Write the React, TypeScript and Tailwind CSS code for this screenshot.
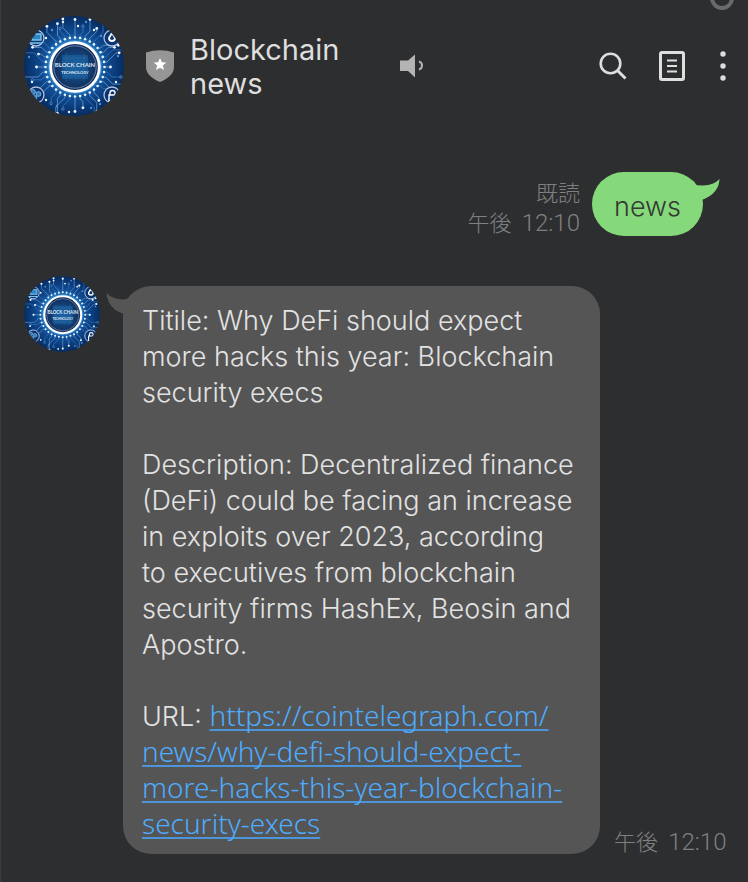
type Point = [number, number];

type Trace = { points: Point[]; bright: boolean };

const CENTER = 51;

function buildTraces(): Trace[] {
  const traces: Trace[] = [];
  const count = 36;
  for (let i = 0; i < count; i++) {
    const angle = (i / count) * Math.PI * 2;
    const dx = Math.cos(angle);
    const dy = Math.sin(angle);
    const start: Point = [CENTER + dx * 29.5, CENTER + dy * 29.5];
    const reach = 4 + ((i * 5) % 4) * 3;
    const tail = 3 + ((i * 7) % 5) * 3;
    const sx = Math.sign(dx) || 1;
    const sy = Math.sign(dy) || 1;
    const points: Point[] = [start];
    if (Math.abs(dx) > Math.abs(dy)) {
      const bend = Math.abs(dy) < 0.12 ? 0 : reach * 0.7;
      points.push([start[0] + sx * 3, start[1]]);
      points.push([start[0] + sx * (3 + bend), start[1] + sy * bend]);
      points.push([start[0] + sx * (3 + bend + tail), start[1] + sy * bend]);
    } else {
      const bend = Math.abs(dx) < 0.12 ? 0 : reach * 0.7;
      points.push([start[0], start[1] + sy * 3]);
      points.push([start[0] + sx * bend, start[1] + sy * (3 + bend)]);
      points.push([start[0] + sx * bend, start[1] + sy * (3 + bend + tail)]);
    }
    traces.push({ points, bright: i % 3 !== 1 });
  }
  return traces;
}

const traces = buildTraces();

const looseDots: Point[] = [
  [28, 14], [39, 6], [62, 6], [70, 14], [5, 41], [8, 66], [94, 40], [92, 66],
  [33, 90], [45, 96], [67, 92], [22, 22], [77, 20], [22, 84], [76, 88], [54, 10],
];

const badges: Point[] = [[12, 22], [88, 22], [12, 79], [88, 79]];

function Avatar({ id, className }: { id: string; className: string }) {
  return (
    <svg viewBox="0 0 100 100" className={className} role="img" aria-label="Blockchain news">
      <defs>
        <radialGradient id={id + '-bg'}>
          <stop offset="0.5" stopColor="#2475ba" />
          <stop offset="0.64" stopColor="#114d94" />
          <stop offset="0.85" stopColor="#0a3a78" />
          <stop offset="1" stopColor="#072c60" />
        </radialGradient>
        <radialGradient id={id + '-core'}>
          <stop offset="0" stopColor="#1b5c9b" />
          <stop offset="0.6" stopColor="#133f74" />
          <stop offset="1" stopColor="#102a54" />
        </radialGradient>
        <clipPath id={id + '-clip'}>
          <circle cx="50" cy="50" r="50" />
        </clipPath>
      </defs>
      <g clipPath={'url(#' + id + '-clip)'}>
        <rect width="100" height="100" fill={'url(#' + id + '-bg)'} />
        {traces.map(({ points, bright }, i) => {
          const end = points[points.length - 1];
          return (
            <g key={i}>
              <polyline
                points={points.map((p) => p.join(',')).join(' ')}
                fill="none"
                stroke={bright ? '#78ade4' : '#3f80c8'}
                strokeWidth="0.7"
              />
              <circle cx={points[0][0]} cy={points[0][1]} r="1.3" fill="#e6f6ff" />
              {bright ? (
                <circle cx={end[0]} cy={end[1]} r="1.4" fill="#f2f9ff" />
              ) : (
                <circle cx={end[0]} cy={end[1]} r="1.3" fill="#0c4388" stroke="#6ba4e0" strokeWidth="0.6" />
              )}
            </g>
          );
        })}
        {looseDots.map(([x, y], i) => (
          <circle key={i} cx={x} cy={y} r="1.2" fill={i % 2 ? '#eaf5ff' : '#4c8fd6'} />
        ))}
        {badges.map(([x, y], i) => (
          <circle key={i} cx={x} cy={y} r="8" fill="#0a3470" stroke="#b4c4e2" strokeWidth="1.3" />
        ))}
        <path d="M8 18h9v6H8zM6 27h12" fill="#2f86c4" stroke="#7cc4ec" strokeWidth="1.4" />
        <path d="M88 17l-3 5a3 3 0 1 0 6 0z" fill="none" stroke="#fff" strokeWidth="1.8" />
        <g fill="#347cbd" stroke="#8bbfe8" strokeWidth="0.8">
          <circle cx="9" cy="76" r="2.4" />
          <circle cx="14.500" cy="78" r="2.4" />
          <circle cx="10.500" cy="82" r="2.4" />
        </g>
        <path d="M85 79h7v6h-7zM86 79v-2a2.500 2.500 0 0 1 5 0v2" fill="none" stroke="#fff" strokeWidth="1.4" />
        <circle cx="51" cy="51" r="27" fill="#5db5f0" opacity="0.35" />
        <circle cx="51" cy="51" r="24.3" fill={'url(#' + id + '-core)'} stroke="#fff" strokeWidth="2.8" />
        <circle cx="51" cy="51" r="21.200" fill="none" stroke="#8296ba" strokeWidth="0.8" />
        <path d="M38 39h26v24H38z" fill="#2474b5" opacity="0.4" />
        <path d="M38 42h26M38 60h26M42 36v30M60 36v30" stroke="#3f8dca" strokeWidth="0.4" opacity="0.6" />
        <text x="51" y="50.5" textAnchor="middle" className="fill-[#dfe8f4] font-['Lato',sans-serif] text-[6px] font-bold">
          BLOCK CHAIN
        </text>
        <text x="51" y="58" textAnchor="middle" className="fill-[#dce9f7] font-['Lato',sans-serif] text-[4px] font-bold">
          TECHNOLOGY
        </text>
      </g>
    </svg>
  );
}

function Header() {
  return (
    <header className="flex h-33 items-center pl-6 pr-[22px]">
      <Avatar id="header" className="size-25 shrink-0" />
      <svg viewBox="0 0 28 32" className="ml-5.5 h-8 w-7 shrink-0" aria-hidden="true">
        <path d="M0 2.4Q14-2 28 2.4V17c0 7-6 11.500-14 15C6 28.500 0 24 0 17z" fill="#969696" />
        <path d="M14 8l1.800 4.200 4.500.4-3.400 3 1 4.400-3.900-2.300-3.900 2.300 1-4.400-3.400-3 4.500-.4z" fill="#fff" />
      </svg>
      <h1 className="ml-4 mt-0.5 w-50 text-[29px] font-normal leading-[34px]">Blockchain news</h1>
      <svg viewBox="0 0 24 24" className="ml-2.5 size-6 shrink-0" aria-label="Sound on" role="img">
        <path d="M0 6.500h8L15 .5v23L8 17H0z" fill="#b4b4b4" />
        <path d="M19 7.500c4 1 4 7 0 8" fill="none" stroke="#b4b4b4" strokeWidth="2" />
      </svg>
      <nav className="ml-auto flex items-center">
        <button type="button" aria-label="Search" className="mr-8">
          <svg viewBox="0 0 28 28" className="size-7" fill="none" stroke="#dedede">
            <circle cx="11.500" cy="11.500" r="9.800" strokeWidth="2.600" />
            <path d="M18.500 18.500l8 8" strokeWidth="3" />
          </svg>
        </button>
        <button type="button" aria-label="Notes" className="mr-[35px]">
          <svg viewBox="0 0 26 30" className="h-7.5 w-6.5" fill="none" stroke="#dedede">
            <rect x="1.500" y="1.500" width="23" height="27" rx="1.500" strokeWidth="3" />
            <path d="M8 9.500h10M8 15h10M8 20.500h10" strokeWidth="2.200" />
          </svg>
        </button>
        <button type="button" aria-label="More">
          <svg viewBox="0 0 6 30" className="h-7.5 w-1.5" fill="#dedede">
            <circle cx="3" cy="3" r="2.700" />
            <circle cx="3" cy="15" r="2.700" />
            <circle cx="3" cy="27" r="2.700" />
          </svg>
        </button>
      </nav>
    </header>
  );
}

function Time() {
  return (
    <time className="whitespace-nowrap">
      午後 <span className="ml-1 font-['Roboto',sans-serif] text-2xl leading-none">12:10</span>
    </time>
  );
}

function SentMessage() {
  return (
    <div className="mt-10 flex items-start justify-end pr-[45px]">
      <p className="mr-3 mt-1.5 text-right text-[22px] leading-[30px] text-[#7f8081]">
        既読
        <br />
        <Time />
      </p>
      <div className="relative rounded-[32px] bg-[#86d97b] px-[22px] pb-[11px] pt-[17px] text-[27px] leading-9 text-[#343934]">
        news
        <svg viewBox="0 0 30 24" className="absolute -right-[17px] top-1.5 h-6 w-[30px]" fill="#86d97b" aria-hidden="true">
          <path d="M0 6Q6 7.500 13 7.500Q24 7 29.500 1Q29 15 13 21.500L0 22z" />
        </svg>
      </div>
    </div>
  );
}

function ReceivedMessage() {
  return (
    <div className="mt-[38px] flex items-end pl-6 pr-5">
      <Avatar id="message" className="size-19 shrink-0 self-start" />
      <article className="relative ml-[23px] mt-2.5 w-[477px] rounded-[28px] bg-[#555] pb-[11px] pl-[19px] pt-[17px] text-[27px] leading-9 text-[#e2e2e2]">
        <svg viewBox="0 0 30 24" className="absolute -left-[17px] top-1.5 h-6 w-[30px]" fill="#555" aria-hidden="true">
          <path d="M.5 1Q6 7 18 7.500L30 4V22L17 21.500Q2 17 .5 1z" />
        </svg>
        <p>
          Titile: Why DeFi should expect
          <br />
          more hacks this year: Blockchain
          <br />
          security execs
        </p>
        <p className="mt-9">
          Description: Decentralized finance
          <br />
          (DeFi) could be facing an increase
          <br />
          in exploits over 2023, according
          <br />
          to executives from blockchain
          <br />
          security firms HashEx, Beosin and
          <br />
          Apostro.
        </p>
        <p className="mt-9">
          URL:{' '}
          <a
            href="https://cointelegraph.com/news/why-defi-should-expect-more-hacks-this-year-blockchain-security-execs"
            className="font-['Noto_Sans',sans-serif] text-[28px] leading-none text-[#4eacff] underline decoration-[#4b95d8] decoration-2 underline-offset-3 [text-decoration-skip-ink:none]"
          >
            https://cointelegraph.com/
            <br />
            news/why-defi-should-expect-
            <br />
            more-hacks-this-year-blockchain-
            <br />
            security-execs
          </a>
        </p>
      </article>
      <p className="ml-3.5 text-[22px] leading-6 text-[#7f8081]">
        <Time />
      </p>
    </div>
  );
}

export default function App() {
  return (
    <main className="relative min-h-screen overflow-hidden bg-[#2d2e30] pb-7 font-['Inter','Noto_Sans_CJK_JP',sans-serif] font-light text-[#dedede] shadow-[inset_1px_0_0_#3a3c3d]">
      <div className="absolute -top-3.5 right-3.5 size-6 rounded-full border-4 border-[#6a6a6b]" />
      <Header />
      <SentMessage />
      <ReceivedMessage />
    </main>
  );
}
